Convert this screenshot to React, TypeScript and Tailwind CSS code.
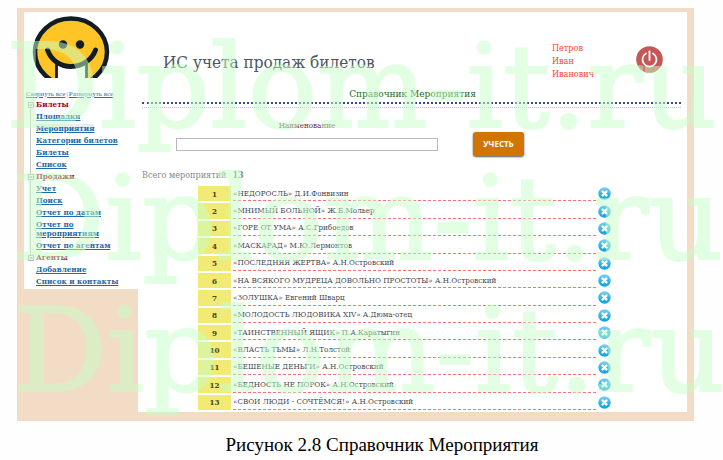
const menu = [
  { title: 'Билеты', items: ['Площадки', 'Мероприятия', 'Категории билетов', 'Билеты', 'Список'] },
  { title: 'Продажи', items: ['Учет', 'Поиск', 'Отчет по датам', 'Отчет по мероприятиям', 'Отчет по агентам'] },
  { title: 'Агенты', items: ['Добавление', 'Список и контакты'] },
];

const events = [
  '«НЕДОРОСЛЬ» Д.И.Фонвизин',
  '«МНИМЫЙ БОЛЬНОЙ» Ж.Б.Мольер',
  '«ГОРЕ ОТ УМА» А.С.Грибоедов',
  '«МАСКАРАД» М.Ю.Лермонтов',
  '«ПОСЛЕДНЯЯ ЖЕРТВА» А.Н.Островский',
  '«НА ВСЯКОГО МУДРЕЦА ДОВОЛЬНО ПРОСТОТЫ» А.Н.Островский',
  '«ЗОЛУШКА» Евгений Шварц',
  '«МОЛОДОСТЬ ЛЮДОВИКА XIV» А.Дюма-отец',
  '«ТАИНСТВЕННЫЙ ЯЩИК» П.А.Каратыгин',
  '«ВЛАСТЬ ТЬМЫ» Л.Н.Толстой',
  '«БЕШЕНЫЕ ДЕНЬГИ» А.Н.Островский',
  '«БЕДНОСТЬ НЕ ПОРОК» А.Н.Островский',
  '«СВОИ ЛЮДИ - СОЧТЁМСЯ!» А.Н.Островский',
];

function Logo() {
  return (
    <svg className="ml-2 h-[62px] w-[78px]" viewBox="0 0 78 62" aria-hidden="true">
      <ellipse cx="39" cy="36" rx="36" ry="33.500" fill="#ffc526" stroke="#111c26" strokeWidth="4.500" />
      <path d="M24.500 47V62H54.500V47Q39 54 24.500 47Z" fill="#fff" />
      <path d="M24.500 46V62M54.500 46V62" stroke="#111c26" strokeWidth="2.800" />
      <path d="M15.500 34C19 44 28 50.500 39 50.500S60 44 63.500 34" fill="none" stroke="#111c26" strokeWidth="5" strokeLinecap="round" />
      <circle cx="31" cy="28.500" r="4.200" fill="#111c26" />
      <circle cx="48" cy="28.500" r="4.200" fill="#111c26" />
    </svg>
  );
}

function PowerIcon() {
  return (
    <svg className="size-[27px]" viewBox="0 0 27 27" aria-hidden="true">
      <circle cx="13.500" cy="13.500" r="13.300" fill="#c55757" />
      <path d="M10 7.500a7 7 0 1 0 7 0" fill="none" stroke="#fff" strokeWidth="1.700" strokeLinecap="round" />
      <path d="M13.500 5.500V14" stroke="#fff" strokeWidth="1.900" strokeLinecap="round" />
    </svg>
  );
}

function DeleteIcon() {
  return (
    <svg className="size-[13px]" viewBox="0 0 13 13" aria-hidden="true">
      <defs>
        <linearGradient id="ball" x1="0" y1="0" x2="0" y2="1">
          <stop offset="0" stopColor="#7fd0f3" />
          <stop offset="0.550" stopColor="#2db2ea" />
          <stop offset="1" stopColor="#0da3e2" />
        </linearGradient>
      </defs>
      <circle cx="6.500" cy="6.500" r="6.200" fill="url(#ball)" />
      <path d="M4.600 4.600L8.400 8.400M8.400 4.600L4.600 8.400" stroke="#fff" strokeWidth="2.400" strokeLinecap="round" />
    </svg>
  );
}

function Sidebar() {
  return (
    <aside className="w-[114px] shrink-0 bg-white pt-1">
      <Logo />
      <div className="mt-2.5 flex h-3 items-center gap-px pl-0.5 font-['Liberation_Serif',serif] text-[7px] whitespace-nowrap text-[#2a71a8]">
        <a href="#collapse" className="underline">Свернуть все</a>
        <span>|</span>
        <a href="#expand" className="underline">Развернуть все</a>
      </div>
      <nav className="relative text-[8px] leading-[9px] font-bold">
        <div className="absolute top-2 bottom-8 left-1.5 border-l border-[#c4c4c4]" />
        {menu.map((group) => (
          <section key={group.title} className="pb-[3px]">
            <h2 className="relative flex items-center gap-0.5 pl-1 text-[#a00028]">
              <svg className="size-[6px] shrink-0" viewBox="0 0 6 6" aria-hidden="true">
                <rect x="0.500" y="0.500" width="5" height="5" fill="#fff" stroke="#b5b5b5" />
                <path d="M1.500 3H4.500" stroke="#888" />
              </svg>
              {group.title}
            </h2>
            <ul>
              {group.items.map((item) => (
                <li key={item} className="mt-[3px] pr-2 pl-3">
                  <a
                    href="#item"
                    className={`block w-fit text-[#2169a8] underline ${item === 'Мероприятия' ? 'bg-[#e8eef0]' : ''}`}
                  >
                    {item}
                  </a>
                </li>
              ))}
            </ul>
          </section>
        ))}
      </nav>
    </aside>
  );
}

function Events() {
  return (
    <div className="mt-[3px] pr-[73px] pl-[58px]">
      <table className="h-[228px] w-full border-separate border-spacing-[2px] text-[8px] leading-[12px]">
        <tbody>
          {events.map((name, i) => (
            <tr key={name}>
              <th scope="row" className="w-[33px] bg-[#f1ea74] p-0 text-center font-bold text-[#4a431c]">
                {i + 1}
              </th>
              <td className="border-b border-dashed border-[#ff7070] p-0 pt-px whitespace-nowrap text-[#3f4a52]">{name}</td>
              <td className="w-[14px] p-0">
                <button type="button" aria-label={`Удалить ${name}`} className="block">
                  <DeleteIcon />
                </button>
              </td>
            </tr>
          ))}
        </tbody>
      </table>
    </div>
  );
}

export default function App() {
  return (
    <div className="relative overflow-hidden bg-[#fefefe] pt-2 pb-1 font-['DejaVu_Serif_Condensed','DejaVu_Serif',serif]">
      <div className="mr-[29px] ml-[17px] flex items-start bg-[#f2dcc5] px-[7px] pt-1 pb-[9px]">
        <Sidebar />
        <main className="min-w-0 flex-1 bg-white">
          <header className="flex h-[76px] items-start pt-[30px] pr-6 pl-[25px]">
            <h1 className="mt-2 text-[17px] leading-6 whitespace-nowrap text-[#4a5660]">ИС учета продаж билетов</h1>
            <div className="ml-auto w-[84px] text-[9px] leading-[13px] text-[#f8442f]">
              Петров
              <br />
              Иван
              <br />
              Иванович
            </div>
            <button type="button" aria-label="Выход" className="mt-1">
              <PowerIcon />
            </button>
          </header>
          <h2 className="h-[14px] text-center text-[10px] leading-3 text-[#176b25]">Справочник Мероприятия</h2>
          <div className="mr-[6px] ml-1 h-[6px] border-t-2 border-b border-dotted border-t-[#3446a0] border-b-[#a5ccd6]" />
          <form className="flex items-start pt-3 pl-[38px]" onSubmit={(e) => e.preventDefault()}>
            <div className="flex w-[262px] flex-col gap-1.5">
              <label htmlFor="name" className="text-center text-[8px] leading-3 text-[#722a3c]">
                Наименование
              </label>
              <input id="name" className="h-[13px] w-full border border-[#b9b9b9] bg-white px-1 text-[9px] outline-none" />
            </div>
            <button
              type="submit"
              className="mt-3 ml-[35px] h-6 w-[51px] rounded-[3px] bg-[#d17500] font-['Open_Sans',sans-serif] text-[8px] font-bold text-white shadow-[0_1px_2px_#555]"
            >
              УЧЕСТЬ
            </button>
          </form>
          <p className="mt-[13px] ml-1 flex gap-1.5 text-[9px] leading-3 text-[#868686]">
            <span>Всего мероприятий</span>
            <b>{events.length}</b>
          </p>
          <Events />
        </main>
      </div>
      <p className="mt-3 pl-[41px] text-center font-['Liberation_Serif',serif] text-[19px] leading-6 text-black">
        Рисунок 2.8 Справочник Мероприятия
      </p>
      <div
        aria-hidden="true"
        className="pointer-events-none absolute inset-0 overflow-hidden pt-[21px] pl-1.5 font-['DejaVu_Serif',serif] text-[116px] leading-[132px] whitespace-nowrap text-[#c8ffc8] opacity-50 [-webkit-text-stroke:2px_#c8ffc8]"
      >
        <div>Diplom-it.ru</div>
        <div className="pl-1.5">Diplom-it.ru</div>
        <div className="pl-2">Diplom-it.ru</div>
      </div>
    </div>
  );
}
